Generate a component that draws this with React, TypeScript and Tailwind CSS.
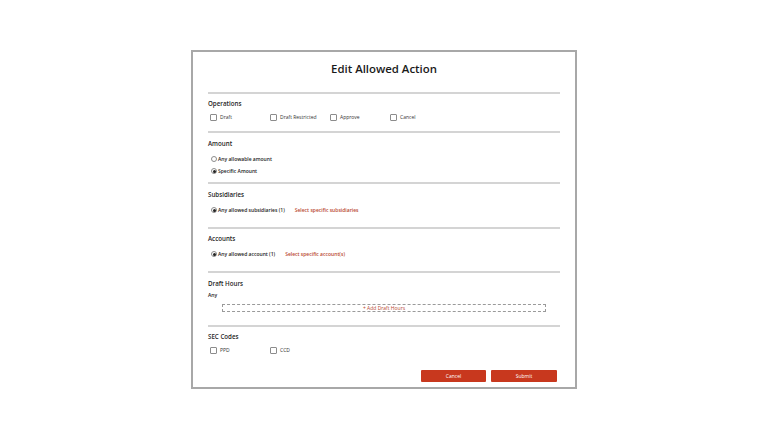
import { ReactNode } from 'react';

function Divider({ className = '' }: { className?: string }) {
  return <div className={`h-[2px] bg-[#d4d4d4] ${className}`} />;
}

function Heading({ children, className = '' }: { children: ReactNode; className?: string }) {
  return (
    <div className={`h-[10px] leading-[10px] text-[6.2px] font-semibold text-[#1f1f1f] ${className}`}>
      {children}
    </div>
  );
}

function Checkbox({ label }: { label: string }) {
  return (
    <label className="w-[60px] h-[8px] flex items-center gap-[3px]">
      <span className="w-[7px] h-[7px] border border-[#8c8c8c] rounded-[1px] bg-white shrink-0" />
      <span className="text-[5px] leading-[8px] text-[#333]">{label}</span>
    </label>
  );
}

function Radio({ label, checked }: { label: string; checked?: boolean }) {
  return (
    <span className="h-[8px] flex items-center gap-[1px]">
      <span className="w-[6px] h-[6px] rounded-full border border-[#8c8c8c] bg-white flex items-center justify-center shrink-0">
        {checked && <span className="w-[3px] h-[3px] rounded-full bg-[#222]" />}
      </span>
      <span className="text-[5px] leading-[8px] font-semibold text-[#222]">{label}</span>
    </span>
  );
}

function LinkText({ children }: { children: ReactNode }) {
  return <span className="text-[5px] leading-[8px] font-semibold text-[#b8472f]">{children}</span>;
}

export default function App() {
  return (
    <div
      className="w-[768px] h-[432px] bg-white pt-[50px]"
      style={{ fontFamily: '"Open Sans", "Liberation Sans", sans-serif' }}
    >
      <div className="mx-auto w-[386px] h-[339px] border-2 border-[#a8a8a8] px-[15px] flex flex-col">
        <div className="h-[34px] flex items-center justify-center">
          <h1 className="text-[11.4px] leading-[14px] font-semibold text-[#1a1a1a]">
            Edit Allowed Action
          </h1>
        </div>

        <Divider className="mt-[6px]" />
        <Heading className="mt-[5px]">Operations</Heading>
        <div className="mt-[4px] pl-[2px] flex">
          <Checkbox label="Draft" />
          <Checkbox label="Draft Restricted" />
          <Checkbox label="Approve" />
          <Checkbox label="Cancel" />
        </div>

        <Divider className="mt-[10px]" />
        <Heading className="mt-[6px]">Amount</Heading>
        <div className="mt-[6px] pl-[3px]">
          <Radio label="Any allowable amount" />
        </div>
        <div className="mt-[4px] pl-[3px]">
          <Radio label="Specific Amount" checked />
        </div>

        <Divider className="mt-[7px]" />
        <Heading className="mt-[6px]">Subsidiaries</Heading>
        <div className="mt-[6px] pl-[3px] flex items-center gap-[10px]">
          <Radio label="Any allowed subsidiaries (1)" checked />
          <LinkText>Select specific subsidiaries</LinkText>
        </div>

        <Divider className="mt-[13px]" />
        <Heading className="mt-[5px]">Accounts</Heading>
        <div className="mt-[6px] pl-[3px] flex items-center gap-[10px]">
          <Radio label="Any allowed account (1)" checked />
          <LinkText>Select specific account(s)</LinkText>
        </div>

        <Divider className="mt-[13px]" />
        <Heading className="mt-[6px]">Draft Hours</Heading>
        <div className="mt-[2px] h-[8px] leading-[8px] text-[5px] font-semibold text-[#222]">Any</div>
        <div className="mt-[5px] mx-[14px] h-[8px] border border-dashed border-[#9a9a9a] flex items-center justify-center">
          <span className="text-[5px] leading-[6px] text-[#b8472f]">+ Add Draft Hours</span>
        </div>

        <Divider className="mt-[13px]" />
        <Heading className="mt-[5px]">SEC Codes</Heading>
        <div className="mt-[4px] pl-[2px] flex">
          <Checkbox label="PPD" />
          <Checkbox label="CCD" />
        </div>

        <div className="mt-[16px] flex justify-end gap-[5px] pr-[3px]">
          <button
            type="button"
            className="w-[65px] h-[12px] bg-[#c8381e] text-white text-[5px] leading-[12px] rounded-[1px]"
          >
            Cancel
          </button>
          <button
            type="button"
            className="w-[66px] h-[12px] bg-[#c8381e] text-white text-[5px] leading-[12px] rounded-[1px]"
          >
            Submit
          </button>
        </div>
      </div>
    </div>
  );
}
